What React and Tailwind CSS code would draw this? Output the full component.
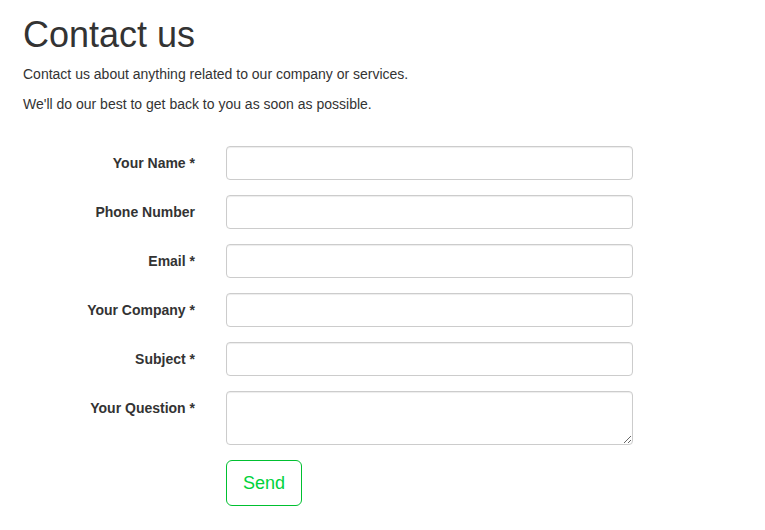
export default function App() {
  const rows = [
    { label: "Your Name *" },
    { label: "Phone Number" },
    { label: "Email *" },
    { label: "Your Company *" },
    { label: "Subject *" },
  ];
  return (
    <div className="min-h-[530px] bg-white pl-[23px] text-[14px] leading-[20px] text-[#333]" style={{ fontFamily: '"Liberation Sans", Arial, sans-serif' }}>
      <h1 className="pt-[15px] mb-[9px] text-[36px] leading-[40px] font-normal">Contact us</h1>
      <p className="mb-[10px]">Contact us about anything related to our company or services.</p>
      <p className="mb-[10px]">We'll do our best to get back to you as soon as possible.</p>
      <form className="mt-[32px] flex flex-col gap-[15px]" onSubmit={(e) => e.preventDefault()}>
        {rows.map((r) => (
          <div key={r.label} className="flex items-start">
            <label className="w-[172px] pt-[7px] text-right font-bold">{r.label}</label>
            <input type="text" className="ml-[31px] h-[34px] w-[407px] rounded-[4px] border border-[#ccc] bg-white px-[12px] shadow-[inset_0_1px_1px_rgba(0,0,0,0.075)] outline-none" />
          </div>
        ))}
        <div className="flex items-start">
          <label className="w-[172px] pt-[7px] text-right font-bold">Your Question *</label>
          <textarea className="ml-[31px] h-[54px] w-[407px] rounded-[4px] border border-[#ccc] bg-white px-[12px] py-[6px] shadow-[inset_0_1px_1px_rgba(0,0,0,0.075)] outline-none" />
        </div>
        <div className="flex">
          <button type="submit" className="ml-[203px] h-[46px] w-[76px] rounded-[6px] border border-[#00c030] bg-white text-[18px] leading-[24px] text-[#00d23c]">Send</button>
        </div>
      </form>
    </div>
  );
}
